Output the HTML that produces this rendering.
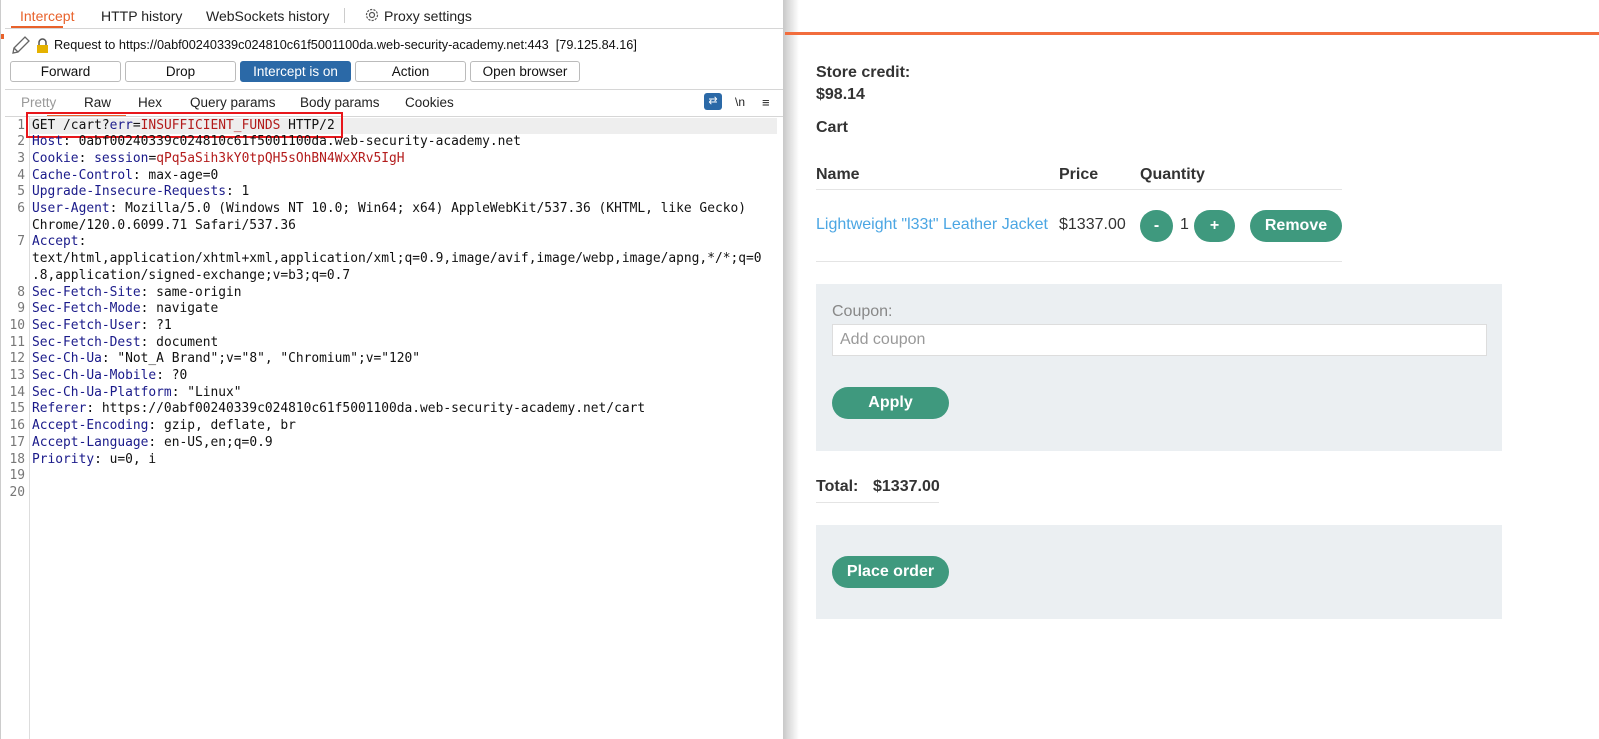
<!DOCTYPE html>
<html><head><meta charset="utf-8"><style>
*{margin:0;padding:0;box-sizing:border-box}
body{width:1599px;height:739px;overflow:hidden;background:#fff;font-family:"Liberation Sans",sans-serif;position:relative}
.burp{position:absolute;left:0;top:0;width:783px;height:739px;background:#fff;border-left:1px solid #ccc}
.shadow{position:absolute;left:783px;top:0;width:16px;height:739px;background:linear-gradient(to right,#c8c8c8,#fff)}
.tabs{position:absolute;left:4px;top:0;width:779px;height:29px;border-bottom:1px solid #d6d6d6;font-size:14px;color:#222}
.tabs span{position:absolute;top:8px}
.btn{position:absolute;top:61px;height:21px;border:1px solid #bbb;border-radius:3px;background:#fff;font-size:13.5px;text-align:center;line-height:19px;color:#111}
.sub{position:absolute;top:95px;font-size:13.5px;color:#222}
.code{position:absolute;left:31px;top:117.5px;font-family:"DejaVu Sans Mono",monospace;font-size:12.9px;line-height:16.7px;color:#111;white-space:pre}
.nums{position:absolute;left:4px;width:20px;top:117.5px;font-family:"DejaVu Sans Mono",monospace;font-size:12.9px;line-height:16.7px;color:#777;text-align:right;white-space:pre}
.k{color:#1a1a8a}.r{color:#b31b1b}
.right{position:absolute;left:785px;top:0;right:0;height:739px}
.g{color:#333;font-weight:bold;font-size:16px;position:absolute}
.pill{position:absolute;background:#3f997e;color:#fff;font-weight:bold;font-size:16px;text-align:center;border-radius:16px}
</style></head><body>
<div class="burp">
 <div class="tabs">
  <span style="left:15px;color:#e8622b">Intercept</span>
  <div style="position:absolute;left:6px;top:26px;width:52px;height:2px;background:#e8622b"></div>
  <span style="left:96px">HTTP history</span>
  <span style="left:201px">WebSockets history</span>
  <div style="position:absolute;left:339px;top:8px;width:1px;height:15px;background:#ccc"></div>
  <svg style="position:absolute;left:359px;top:7px" width="16" height="16" viewBox="0 0 16 16"><circle cx="8" cy="8" r="2.5" fill="none" stroke="#555" stroke-width="1.2"/><circle cx="8" cy="8" r="5.5" fill="none" stroke="#555" stroke-width="1.2" stroke-dasharray="2.2 1.2"/></svg>
  <span style="left:379px">Proxy settings</span>
 </div>
 <div style="position:absolute;left:0;top:34px;width:3px;height:5px;background:#e8622b"></div>
 <svg style="position:absolute;left:10px;top:36px" width="20" height="19" viewBox="0 0 20 19"><path d="M2 17 L3 12 L14 1 L18 5 L7 16 Z M3 12 L7 16" fill="none" stroke="#666" stroke-width="1.3"/></svg>
 <svg style="position:absolute;left:35px;top:38px" width="13" height="15" viewBox="0 0 13 15"><path d="M3 7 V4.5 a3.5 3.5 0 0 1 7 0 V7" fill="none" stroke="#555" stroke-width="1.5"/><rect x="1" y="7" width="11" height="8" fill="#e5b200"/></svg>
 <div style="position:absolute;left:53px;top:38px;font-size:12.7px;color:#111">Request to https://0abf00240339c024810c61f5001100da.web-security-academy.net:443&nbsp;&nbsp;[79.125.84.16]</div>
 <div class="btn" style="left:9px;width:111px">Forward</div>
 <div class="btn" style="left:124px;width:111px">Drop</div>
 <div class="btn" style="left:239px;width:111px;background:#2b69a7;border-color:#2b69a7;color:#fff">Intercept is on</div>
 <div class="btn" style="left:354px;width:111px">Action</div>
 <div class="btn" style="left:469px;width:110px">Open browser</div>
 <div style="position:absolute;left:4px;top:89px;width:779px;height:1px;background:#d6d6d6"></div>
 <div class="sub" style="left:20px;color:#999">Pretty</div>
 <div class="sub" style="left:83px">Raw</div>
 <div style="position:absolute;left:46px;top:115px;width:79px;height:2px;background:#e8622b"></div>
 <div class="sub" style="left:137px">Hex</div>
 <div class="sub" style="left:189px">Query params</div>
 <div class="sub" style="left:299px">Body params</div>
 <div class="sub" style="left:404px">Cookies</div>
 <div style="position:absolute;left:703px;top:93px;width:18px;height:17px;background:#2b69a7;border-radius:3px;color:#fff;font-size:11px;text-align:center;line-height:17px">⇄</div>
 <div class="sub" style="left:734px;font-size:12px">\n</div>
 <div class="sub" style="left:761px;font-size:13px">≡</div>
 <div style="position:absolute;left:4px;top:116px;width:779px;height:1px;background:#d6d6d6"></div>
 <div style="position:absolute;left:28px;top:117px;width:1px;height:622px;background:#ddd"></div>
 <div style="position:absolute;left:29px;top:118px;width:747px;height:16px;background:#eee"></div>
 <div style="position:absolute;left:25px;top:112px;width:317px;height:26px;border:2px solid #e8161b"></div>
<div class="nums">1
2
3
4
5
6

7


8
9
10
11
12
13
14
15
16
17
18
19
20</div>
<div class="code">GET /cart?<span class="k">err</span>=<span class="r">INSUFFICIENT_FUNDS</span> HTTP/2
<span class="k">Host</span>: 0abf00240339c024810c61f5001100da.web-security-academy.net
<span class="k">Cookie</span>: <span class="k">session</span>=<span class="r">qPq5aSih3kY0tpQH5sOhBN4WxXRv5IgH</span>
<span class="k">Cache-Control</span>: max-age=0
<span class="k">Upgrade-Insecure-Requests</span>: 1
<span class="k">User-Agent</span>: Mozilla/5.0 (Windows NT 10.0; Win64; x64) AppleWebKit/537.36 (KHTML, like Gecko)
Chrome/120.0.6099.71 Safari/537.36
<span class="k">Accept</span>:
text/html,application/xhtml+xml,application/xml;q=0.9,image/avif,image/webp,image/apng,*/*;q=0
.8,application/signed-exchange;v=b3;q=0.7
<span class="k">Sec-Fetch-Site</span>: same-origin
<span class="k">Sec-Fetch-Mode</span>: navigate
<span class="k">Sec-Fetch-User</span>: ?1
<span class="k">Sec-Fetch-Dest</span>: document
<span class="k">Sec-Ch-Ua</span>: "Not_A Brand";v="8", "Chromium";v="120"
<span class="k">Sec-Ch-Ua-Mobile</span>: ?0
<span class="k">Sec-Ch-Ua-Platform</span>: "Linux"
<span class="k">Referer</span>: https://0abf00240339c024810c61f5001100da.web-security-academy.net/cart
<span class="k">Accept-Encoding</span>: gzip, deflate, br
<span class="k">Accept-Language</span>: en-US,en;q=0.9
<span class="k">Priority</span>: u=0, i</div>
</div>
<div class="shadow"></div>
<div class="right">
 <div style="position:absolute;left:0;right:0;top:32px;height:3px;background:#f26d3d"></div>
 <div class="g" style="left:31px;top:64px">Store credit:</div>
 <div class="g" style="left:31px;top:86px">$98.14</div>
 <div class="g" style="left:31px;top:119px">Cart</div>
 <div class="g" style="left:31px;top:166px">Name</div>
 <div class="g" style="left:274px;top:166px">Price</div>
 <div class="g" style="left:355px;top:166px">Quantity</div>
 <div style="position:absolute;left:31px;top:189px;width:526px;height:1px;background:#e4e4e4"></div>
 <div style="position:absolute;left:31px;top:216px;font-size:16px;color:#4ba6e3">Lightweight "l33t" Leather Jacket</div>
 <div style="position:absolute;left:274px;top:216px;font-size:16px;color:#333">$1337.00</div>
 <div class="pill" style="left:355px;top:210px;width:33px;height:32px;line-height:32px">-</div>
 <div style="position:absolute;left:395px;top:216px;font-size:16px;color:#333">1</div>
 <div class="pill" style="left:409px;top:210px;width:41px;height:32px;line-height:32px">+</div>
 <div class="pill" style="left:465px;top:210px;width:92px;height:32px;line-height:32px">Remove</div>
 <div style="position:absolute;left:31px;top:261px;width:526px;height:1px;background:#e4e4e4"></div>
 <div style="position:absolute;left:31px;top:284px;width:686px;height:167px;background:#ebeff2"></div>
 <div style="position:absolute;left:47px;top:303px;font-size:16px;color:#888">Coupon:</div>
 <div style="position:absolute;left:47px;top:324px;width:655px;height:32px;background:#fff;border:1px solid #ddd;font-size:16px;color:#999;padding:6px 0 0 7px">Add coupon</div>
 <div class="pill" style="left:47px;top:387px;width:117px;height:32px;line-height:32px">Apply</div>
 <div class="g" style="left:31px;top:478px">Total:</div>
 <div class="g" style="left:88px;top:478px">$1337.00</div>
 <div style="position:absolute;left:31px;top:502px;width:123px;height:1px;background:#e4e4e4"></div>
 <div style="position:absolute;left:31px;top:525px;width:686px;height:94px;background:#ebeff2"></div>
 <div class="pill" style="left:47px;top:556px;width:117px;height:32px;line-height:32px">Place order</div>
</div>
</body></html>
